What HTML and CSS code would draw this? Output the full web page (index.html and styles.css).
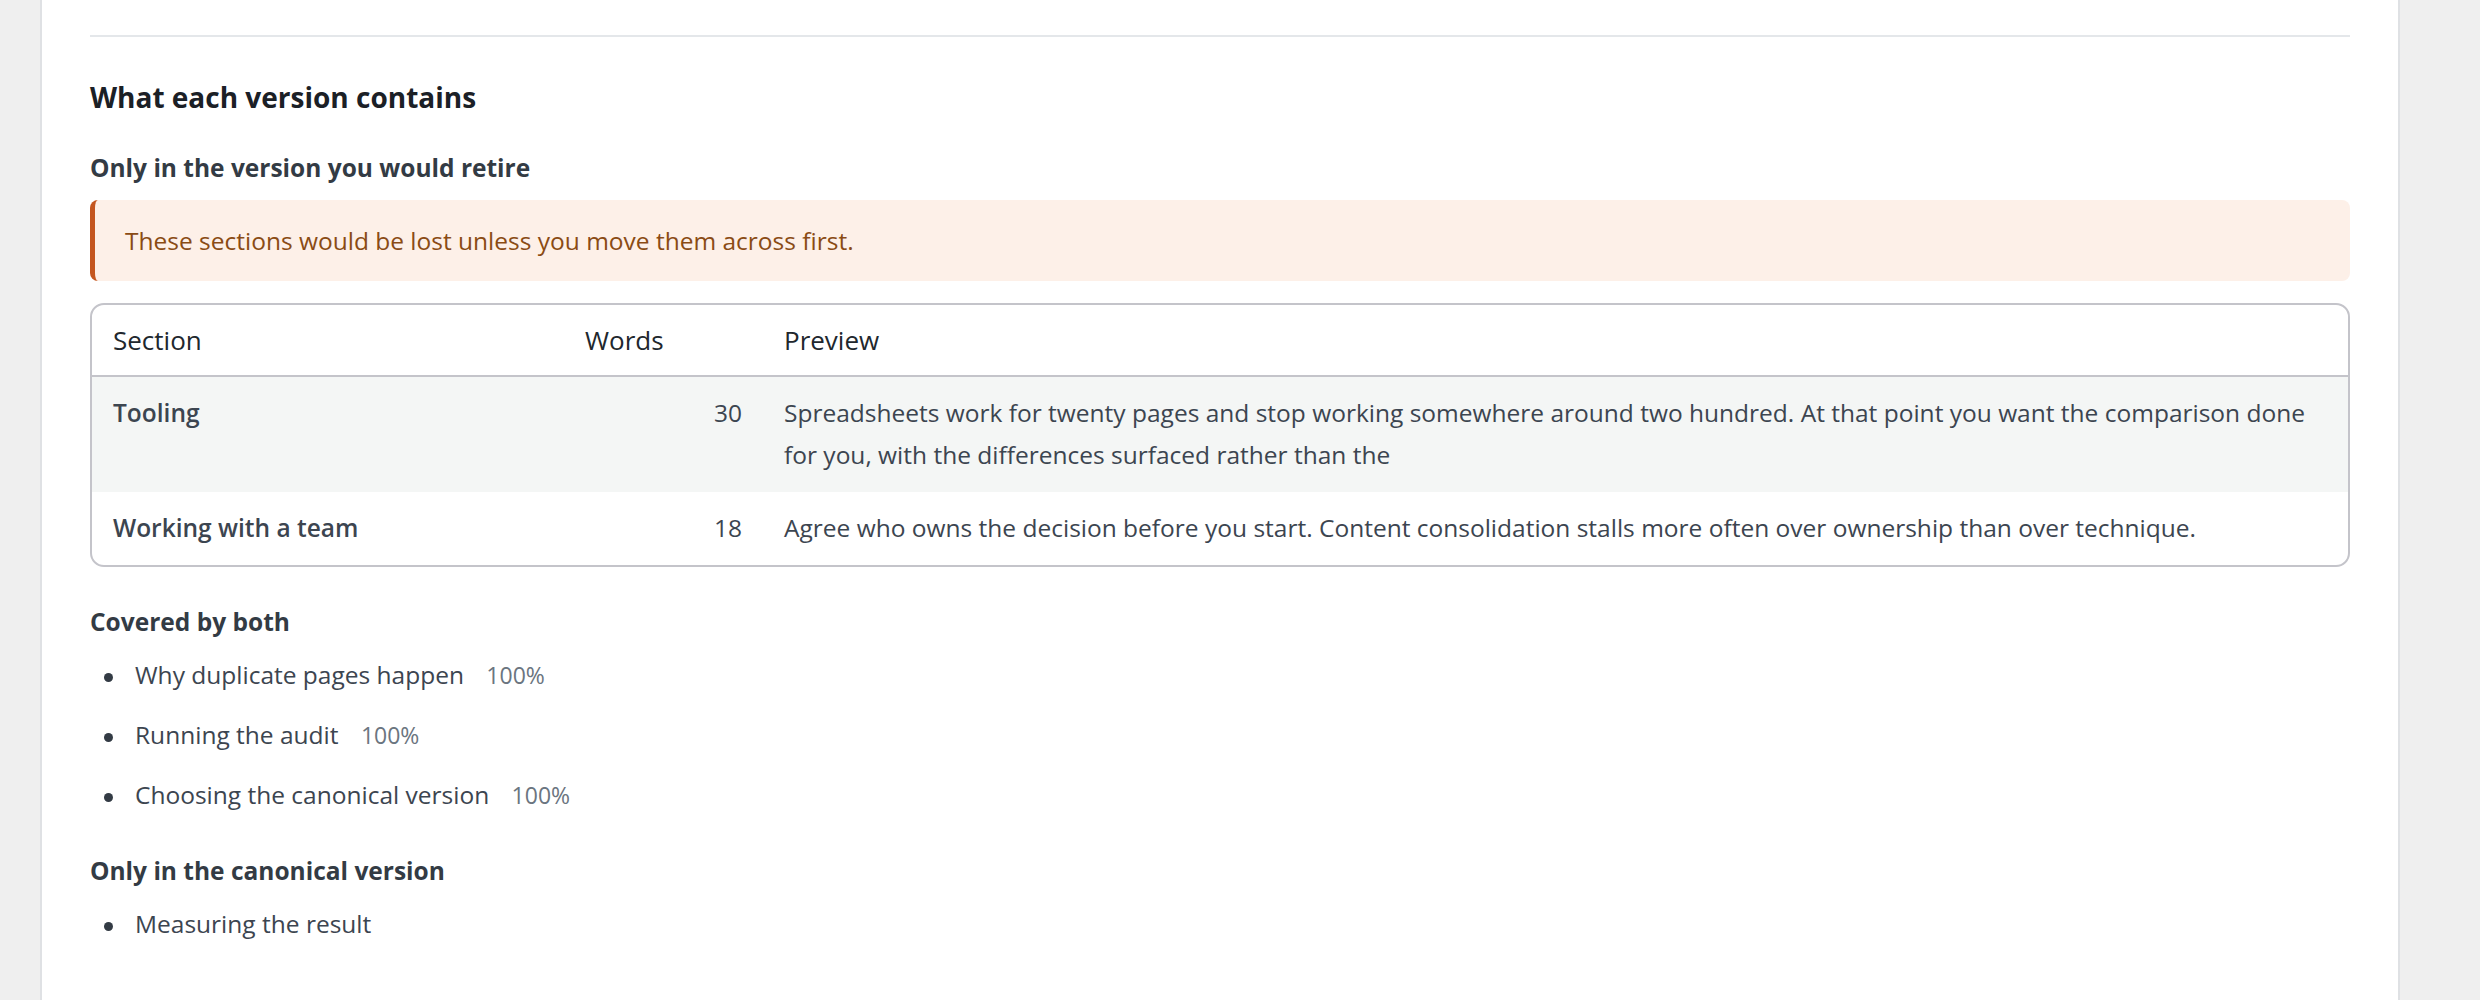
FILE: index.html
```html
<!DOCTYPE html>
<html lang="en">
<head>
    <meta charset="UTF-8">
    <meta name="viewport" content="width=device-width, initial-scale=1.0">
    <title>Compare versions</title>
    <link rel="stylesheet" href="styles.css">
</head>
<body>
    <div class="page">
        <hr class="divider">

        <section class="contents">
            <h2>What each version contains</h2>

            <h3>Only in the version you would retire</h3>
            <div class="notice">
                These sections would be lost unless you move them across first.
            </div>

            <div class="table-wrap">
                <table class="sections">
                    <colgroup>
                        <col class="col-section">
                        <col class="col-words">
                        <col>
                    </colgroup>
                    <thead>
                        <tr>
                            <th>Section</th>
                            <th>Words</th>
                            <th>Preview</th>
                        </tr>
                    </thead>
                    <tbody>
                        <tr class="shaded">
                            <td class="name">Tooling</td>
                            <td class="num">30</td>
                            <td>Spreadsheets work for twenty pages and stop working somewhere around two hundred. At that point you want the comparison done for you, with the differences surfaced rather than the</td>
                        </tr>
                        <tr>
                            <td class="name">Working with a team</td>
                            <td class="num">18</td>
                            <td>Agree who owns the decision before you start. Content consolidation stalls more often over ownership than over technique.</td>
                        </tr>
                    </tbody>
                </table>
            </div>

            <h3>Covered by both</h3>
            <ul class="plain-list">
                <li>Why duplicate pages happen <span class="match">100%</span></li>
                <li>Running the audit <span class="match">100%</span></li>
                <li>Choosing the canonical version <span class="match">100%</span></li>
            </ul>

            <h3>Only in the canonical version</h3>
            <ul class="plain-list">
                <li>Measuring the result</li>
            </ul>
        </section>
    </div>
</body>
</html>
```

FILE: styles.css
```css
body {
    margin: 0;
    background-color: #efefef;
    font-family: "Open Sans", "Noto Sans", sans-serif;
    font-size: 24.5px;
    line-height: 42px;
    color: #3c4550;
}
.page {
    margin-left: 40px;
    width: 2260px;
    min-height: 1000px;
    padding: 35px 48px 0;
    background-color: #fff;
    border-left: 2px solid #dfe1e4;
    border-right: 2px solid #dfe1e4;
}
.divider {
    margin: 0;
    border: 0;
    border-top: 2px solid #e4e7ea;
}
.contents {
    padding-top: 41px;
}
h2 {
    margin: 0;
    font-size: 28px;
    line-height: 38px;
    font-weight: 700;
    color: #1b2026;
}
h3 {
    margin: 38px 0 15px;
    font-size: 24.5px;
    line-height: 34px;
    font-weight: 700;
    color: #333b44;
}
h2 + h3 {
    margin-top: 35px;
}
.notice {
    margin-bottom: 22px;
    padding: 20px 30px 19px 30px;
    background-color: #fdf0e8;
    border-left: 5px solid #c4561f;
    border-radius: 8px;
    color: #8a4b14;
}
.table-wrap {
    border: 2px solid #c4c4ca;
    border-radius: 14px;
    overflow: hidden;
}
.sections {
    width: 100%;
    border-collapse: collapse;
    table-layout: fixed;
}
.col-section {
    width: 472px;
}
.col-words {
    width: 199px;
}
.sections th {
    padding: 14px 21px;
    text-align: left;
    font-size: 26px;
    font-weight: 400;
    color: #21272d;
    border-bottom: 2px solid #c4c4ca;
}
.sections td {
    padding: 15px 21px 16px;
    vertical-align: top;
}
.sections .shaded td {
    background-color: #f4f6f5;
}
.sections .name {
    font-weight: 600;
}
.sections .num {
    text-align: right;
}
.plain-list {
    margin: 0;
    padding-left: 45px;
    list-style: none;
}
/* round dot in place of the default disc, a touch larger */
.plain-list li::before {
    content: "";
    display: inline-block;
    width: 9px;
    height: 9px;
    margin-left: -31px;
    margin-right: 22px;
    border-radius: 50%;
    background-color: #333b44;
    vertical-align: middle;
}
.plain-list li + li {
    margin-top: 18px;
}
.match {
    margin-left: 16px;
    font-size: 23px;
    color: #6b7580;
}
```
